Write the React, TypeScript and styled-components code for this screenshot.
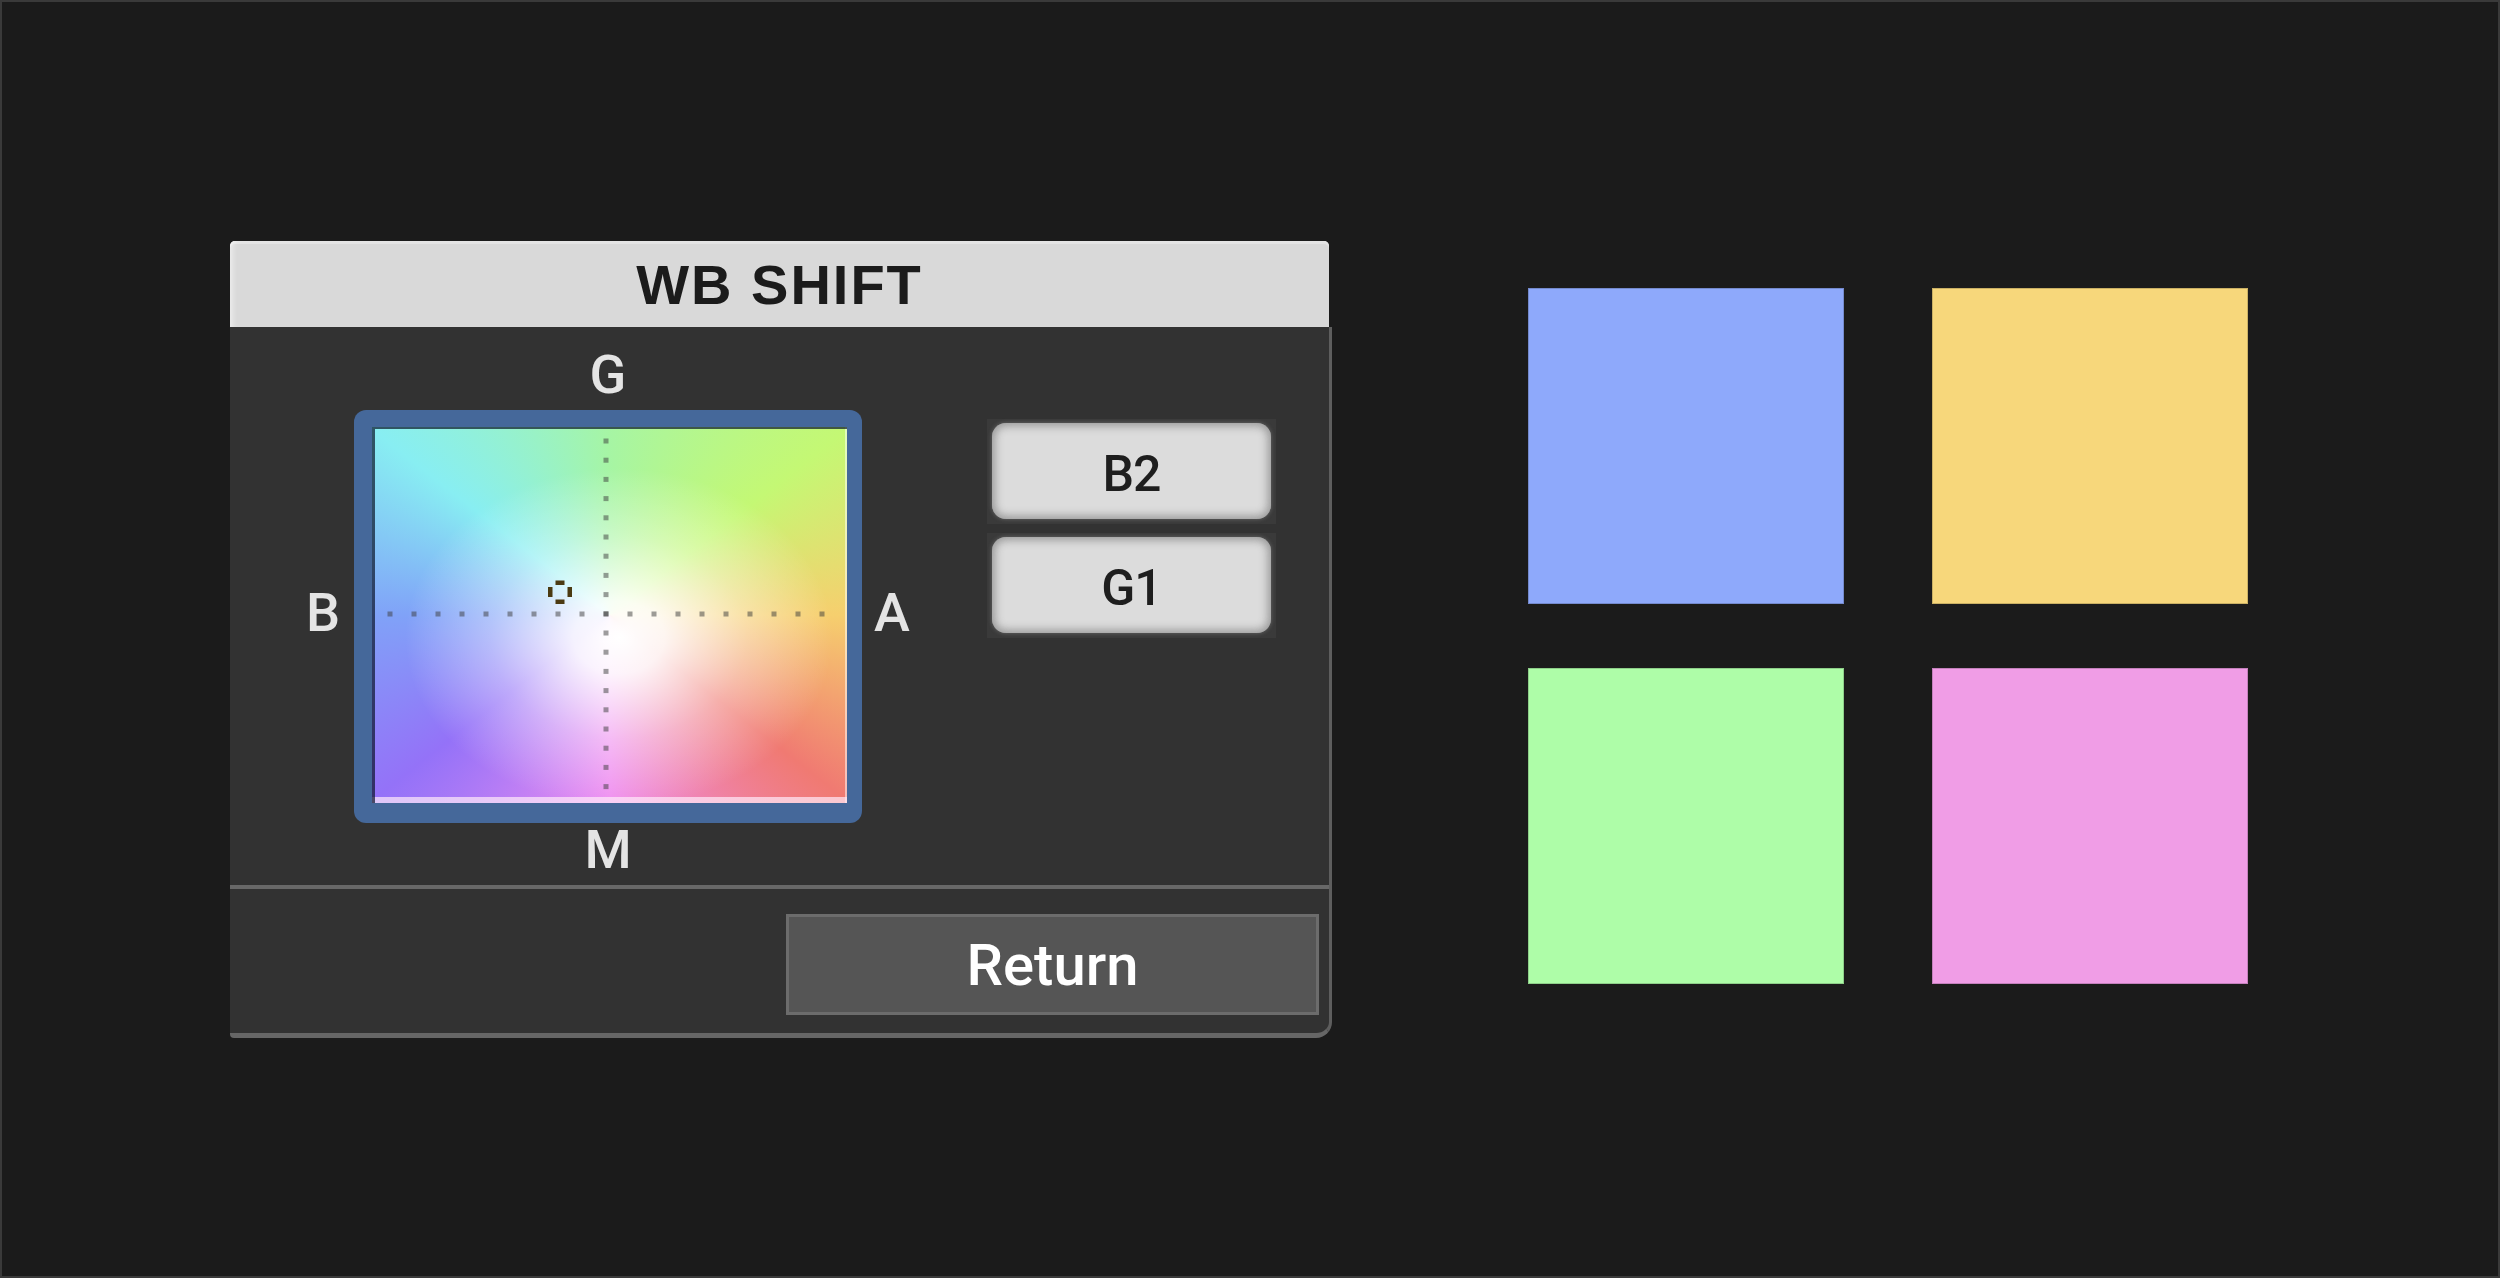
import styled, { createGlobalStyle } from "styled-components";

const GlobalStyle = createGlobalStyle`
  html, body {
    margin: 0;
    padding: 0;
    background: #1b1b1b;
  }
  * {
    box-sizing: border-box;
  }
`;

const SWATCHES = ["#8ea9fb", "#f7d77b", "#aefda8", "#f09de6"];

// picker drawing area (inside the blue frame)
const AREA_W = 475;
const AREA_H = 376;
const CENTER_X = 234;
const CENTER_Y = 187;
const CURSOR = { x: 188, y: 165 };

const vDots = Array.from({ length: 19 }, (_, i) => 14 + i * 19.2);
const hDots = Array.from({ length: 19 }, (_, i) => 18 + i * 24);

export default function App() {
  return (
    <>
      <GlobalStyle />
      <Screen>
        <Panel>
          <TitleBar>WB SHIFT</TitleBar>
          <PanelFrame>
            <Body>
              <Picker>
                <AxisLabel area="g" align="bottom">G</AxisLabel>
                <AxisLabel area="b" align="left">B</AxisLabel>
                <ShiftFrame>
                  <ShiftArea>
                    <Overlay
                      width={AREA_W}
                      height={AREA_H}
                      viewBox={`0 0 ${AREA_W} ${AREA_H}`}
                    >
                      {vDots.map((y) => (
                        <rect
                          key={`v${y}`}
                          x={CENTER_X - 2.5}
                          y={y - 2.5}
                          width={5}
                          height={5}
                          fill="rgba(60,60,60,0.5)"
                        />
                      ))}
                      {hDots.map((x) => (
                        <rect
                          key={`h${x}`}
                          x={x - 2.5}
                          y={CENTER_Y - 2.5}
                          width={5}
                          height={5}
                          fill="rgba(60,60,60,0.5)"
                        />
                      ))}
                      <g transform={`translate(${CURSOR.x} ${CURSOR.y})`} fill="#4b3b12">
                        <rect x={-4.5} y={-11.5} width={9} height={4.5} />
                        <rect x={-4.5} y={7.5} width={9} height={4.5} />
                        <rect x={-12} y={-5} width={4.5} height={10} />
                        <rect x={7.5} y={-5} width={4.5} height={10} />
                      </g>
                    </Overlay>
                  </ShiftArea>
                </ShiftFrame>
                <AxisLabel area="a" align="right">A</AxisLabel>
                <AxisLabel area="m" align="top">M</AxisLabel>
              </Picker>

              <ValueColumn>
                <ValueSlot>
                  <ValueButton>B2</ValueButton>
                </ValueSlot>
                <ValueSlot>
                  <ValueButton>G1</ValueButton>
                </ValueSlot>
              </ValueColumn>
            </Body>
            <Separator />
            <Footer>
              <ReturnButton>Return</ReturnButton>
            </Footer>
          </PanelFrame>
        </Panel>

        <SwatchGrid>
          {SWATCHES.map((c) => (
            <Swatch key={c} color={c} />
          ))}
        </SwatchGrid>
      </Screen>
    </>
  );
}

const Screen = styled.div`
  width: 2500px;
  height: 1278px;
  border: 2px solid #3a3a3a;
  background: #1b1b1b;
  display: flex;
  align-items: flex-start;
  padding: 239px 0 0 228px;
  font-family: Roboto, "Liberation Sans", Arial, sans-serif;
`;

const Panel = styled.div`
  width: 1102px;
  display: flex;
  flex-direction: column;
`;

const TitleBar = styled.div`
  height: 86px;
  margin-right: 3px;
  background: #d9d9d9;
  border-radius: 5px 5px 0 0;
  box-shadow: inset 6px 0 6px -4px rgba(255, 255, 255, 0.6),
    inset 0 3px 0 #e4e4e4;
  display: flex;
  align-items: center;
  justify-content: center;
  font-family: "Liberation Sans", Arial, sans-serif;
  font-size: 56px;
  font-weight: 700;
  letter-spacing: 2px;
  color: #1b1b1b;
`;

const PanelFrame = styled.div`
  background: #323232;
  border-right: 3px solid #5e5e5e;
  border-bottom: 5px solid #666666;
  border-radius: 0 0 16px 4px;
`;

const Body = styled.div`
  height: 558px;
  display: flex;
  align-items: flex-start;
`;

const Picker = styled.div`
  display: grid;
  grid-template-columns: 124px 508px 125px;
  grid-template-rows: 83px 413px auto;
  grid-template-areas:
    ". g ."
    "b box a"
    ". m .";
`;

const alignMap: Record<string, string> = {
  bottom: "justify-content: center; align-items: flex-end; padding-bottom: 8px;",
  top: "justify-content: center; align-items: flex-start; padding-top: 0;",
  left: "justify-content: flex-end; align-items: center; padding-right: 14px; padding-bottom: 8px;",
  right: "justify-content: flex-start; align-items: center; padding-left: 12px; padding-bottom: 8px;",
};

const AxisLabel = styled.div<{ area: string; align: string }>`
  grid-area: ${(p) => p.area};
  display: flex;
  font-size: 54px;
  font-weight: 500;
  line-height: 1;
  color: #e4e4e4;
  ${(p) => alignMap[p.align]}
`;

const ShiftFrame = styled.div`
  grid-area: box;
  background: #45689a;
  border-radius: 12px;
  padding: 17px 15px 20px 18px;
`;

const ShiftArea = styled.div`
  position: relative;
  width: ${AREA_W}px;
  height: ${AREA_H}px;
  background:
    radial-gradient(
      ellipse 60% 60% at 52% 56%,
      #ffffff 0%,
      rgba(255, 255, 255, 0.9) 16%,
      rgba(255, 255, 255, 0.4) 45%,
      rgba(255, 255, 255, 0) 75%
    ),
    conic-gradient(
      from 0deg at 50% 50%,
      #a6f5a4 0deg,
      #c4f874 52deg,
      #f6cf6e 90deg,
      #f07a72 128deg,
      #ef8ef0 180deg,
      #9472f8 232deg,
      #80a2f8 270deg,
      #88eef2 308deg,
      #a6f5a4 360deg
    );
  box-shadow: inset 3px 2px 0 rgba(10, 20, 40, 0.7),
    inset 0 -6px 0 rgba(255, 235, 250, 0.7),
    inset -2px 0 0 rgba(255, 255, 255, 0.5);
`;

const Overlay = styled.svg`
  position: absolute;
  inset: 0;
  display: block;
`;

const ValueColumn = styled.div`
  width: 289px;
  margin-top: 92px;
  display: flex;
  flex-direction: column;
  gap: 9px;
`;

const ValueSlot = styled.div`
  height: 105px;
  background: #3a3a3a;
  padding: 4px 5px 5px 5px;
  display: flex;
`;

const ValueButton = styled.div`
  flex: 1;
  background: #dcdcdc;
  border-radius: 14px;
  box-shadow: inset 0 0 9px 3px rgba(70, 70, 70, 0.45),
    0 0 4px rgba(200, 200, 200, 0.35);
  display: flex;
  align-items: center;
  justify-content: center;
  padding-top: 6px;
  font-size: 50px;
  font-weight: 500;
  letter-spacing: -1px;
  line-height: 1;
  color: #1e1e1e;
`;

const Separator = styled.div`
  height: 4px;
  background: #686868;
`;

const Footer = styled.div`
  height: 144px;
  display: flex;
  justify-content: flex-end;
  align-items: flex-start;
  padding: 25px 10px 0 0;
`;

const ReturnButton = styled.div`
  width: 533px;
  height: 101px;
  background: #555555;
  border: 3px solid #6c6c6c;
  display: flex;
  align-items: center;
  justify-content: center;
  font-size: 58px;
  font-weight: 500;
  line-height: 1;
  color: #ffffff;
`;

const SwatchGrid = styled.div`
  margin: 47px 0 0 196px;
  display: grid;
  grid-template-columns: repeat(2, 316px);
  grid-auto-rows: 316px;
  column-gap: 88px;
  row-gap: 64px;
`;

const Swatch = styled.div<{ color: string }>`
  background: ${(p) => p.color};
  border: 1px solid rgba(0, 0, 0, 0.18);
`;
